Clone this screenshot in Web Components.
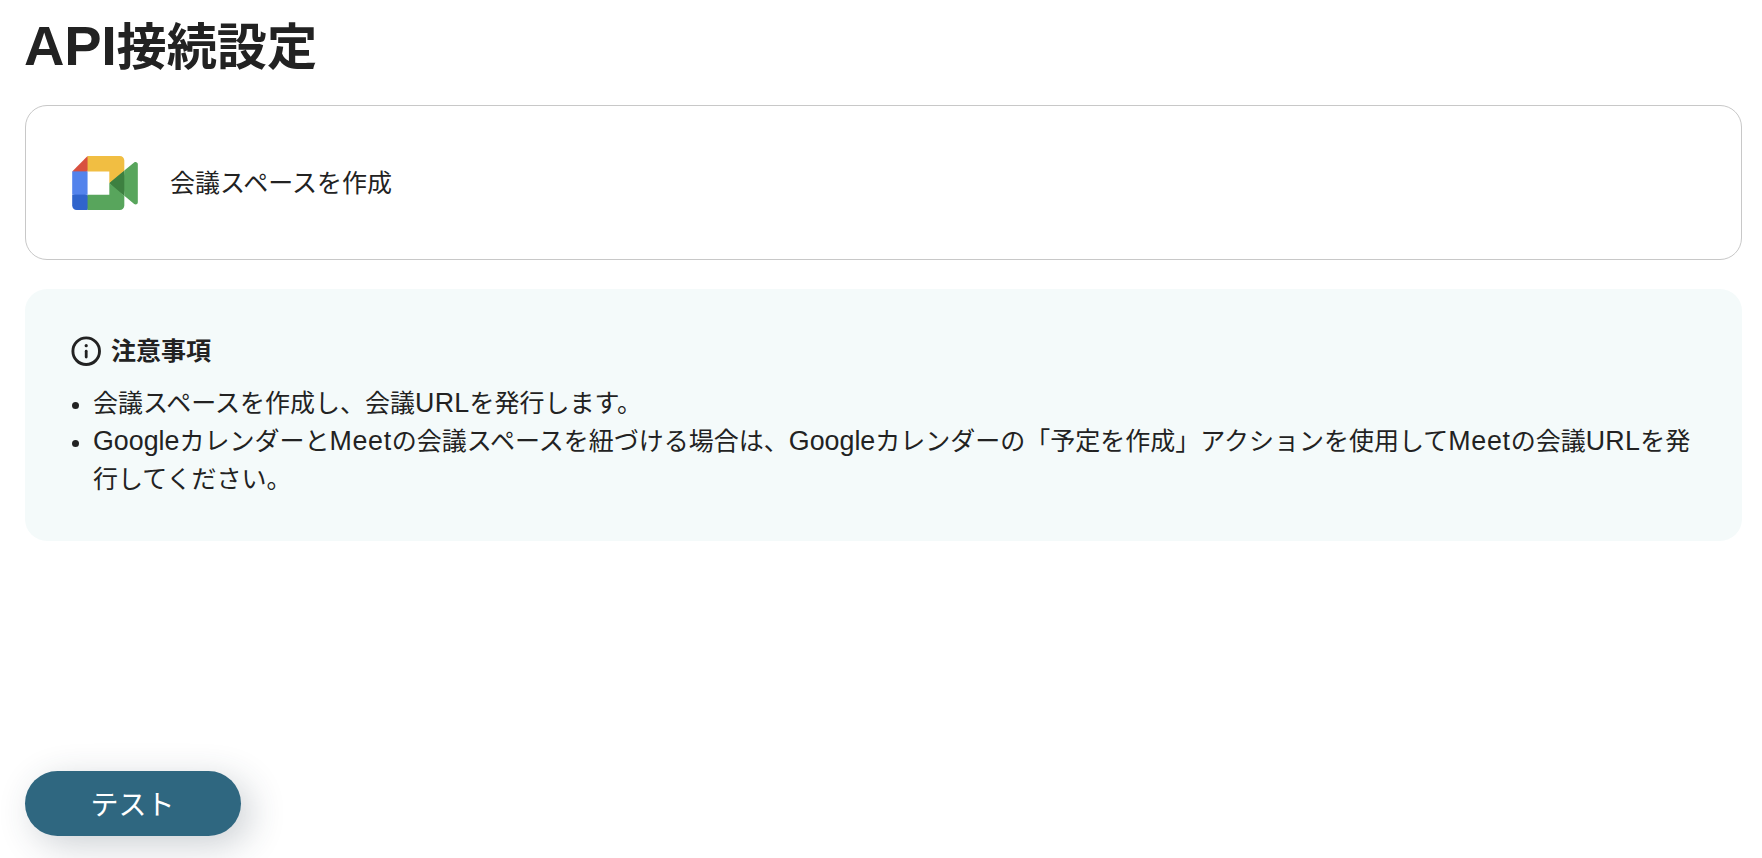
<!DOCTYPE html>
<html lang="ja">
<head>
<meta charset="utf-8">
<title>API接続設定</title>
<style>
  body {
    margin: 0;
    background: #fff;
    color: #222;
    font-family: "Noto Sans CJK JP", sans-serif;
  }
</style>
</head>
<body>
<settings-page>
  <page-title slot="title"><latin-text size="56" spacing="-0.3">API</latin-text>接続設定</page-title>
  <action-card>会議スペースを作成</action-card>
  <notice-box heading="注意事項">
    <notice-item>会議スペースを作成し、会議<latin-text spacing="0.3">URL</latin-text>を発行します。</notice-item>
    <notice-item><latin-text>Google</latin-text>カレンダーと<latin-text spacing="0.7">Meet</latin-text>の会議スペースを紐づける場合は、<latin-text>Google</latin-text>カレンダーの「予定を作成」アクションを使用して<latin-text spacing="0.7">Meet</latin-text>の会議<latin-text spacing="0.3">URL</latin-text>を発行してください。</notice-item>
  </notice-box>
  <pill-button slot="footer">テスト</pill-button>
</settings-page>

<script>
class SettingsPage extends HTMLElement {
  constructor() {
    super();
    this.attachShadow({ mode: "open" });
  }

  connectedCallback() {
    this.shadowRoot.innerHTML = `
      <style>
        :host {
          display: flex;
          flex-direction: column;
          box-sizing: border-box;
          height: 858px;
          padding: 10px 20px 22px 25px;
          overflow: hidden;
        }
        main {
          display: flex;
          flex-direction: column;
          gap: 29px;
          margin-top: 29px;
        }
        footer {
          display: flex;
          margin-top: auto;
        }
      </style>
      <slot name="title"></slot>
      <main><slot></slot></main>
      <footer><slot name="footer"></slot></footer>
    `;
  }
}

class PageTitle extends HTMLElement {
  constructor() {
    super();
    this.attachShadow({ mode: "open" });
  }

  connectedCallback() {
    this.shadowRoot.innerHTML = `
      <style>
        :host { display: block; }
        h1 {
          margin: 0 0 0 -1px;
          height: 66px;
          font-size: 50.2px;
          font-weight: 700;
          line-height: 66px;
          white-space: nowrap;
        }
      </style>
      <h1><slot></slot></h1>
    `;
  }
}

// Latin runs are set a little larger than the kana around them
class LatinText extends HTMLElement {
  constructor() {
    super();
    this.attachShadow({ mode: "open" });
  }

  connectedCallback() {
    const size = this.getAttribute("size") || "26.8";
    const spacing = this.getAttribute("spacing") || "0";
    // no whitespace around the slot, the element is inline
    this.shadowRoot.innerHTML = `<style>
        :host {
          display: inline;
          font-family: "Liberation Sans", Arial, sans-serif;
          font-size: ${size}px;
          line-height: 1;
          letter-spacing: ${spacing}px;
        }
      </style><slot></slot>`;
  }
}

class MeetIcon extends HTMLElement {
  constructor() {
    super();
    this.attachShadow({ mode: "open" });
  }

  connectedCallback() {
    this.shadowRoot.innerHTML = `
      <style>
        :host { display: block; width: 66px; height: 54px; }
        svg { display: block; }
      </style>
      <svg width="66" height="54" viewBox="0 0 87.5 72" aria-hidden="true">
        <path fill="#3d8040" d="M49.5 36l8.53 9.75 11.47 7.33 2-17.02-2-16.64-11.69 6.44z"/>
        <path fill="#3064cc" d="M0 51.5V66c0 3.315 2.685 6 6 6h14.5l3-10.96-3-9.54-9.95-3z"/>
        <path fill="#d8503f" d="M20.5 0L0 20.5l10.55 3 9.95-3 2.95-9.41z"/>
        <path fill="#5383ec" d="M20.5 20.5H0v31h20.5z"/>
        <path fill="#58a55c" d="M82.6 8.68L69.5 19.42v33.66l13.16 10.79c1.97 1.54 4.85.135 4.85-2.37V11c0-2.535-2.945-3.925-4.91-2.32zM49.5 36v15.5h-29V72h43c3.315 0 6-2.685 6-6V53.08z"/>
        <path fill="#f1be42" d="M63.5 0h-43v20.5h29V36l20-16.57V6c0-3.315-2.685-6-6-6z"/>
      </svg>
    `;
  }
}

class InfoIcon extends HTMLElement {
  constructor() {
    super();
    this.attachShadow({ mode: "open" });
  }

  connectedCallback() {
    this.shadowRoot.innerHTML = `
      <style>
        :host { display: block; width: 30px; height: 30px; }
        svg { display: block; }
      </style>
      <svg width="30" height="30" viewBox="0 0 30 30" fill="none" stroke="#222" aria-hidden="true">
        <circle cx="15.2" cy="15.2" r="13.3" stroke-width="2.9"/>
        <path d="M15.2 15.2v5.8" stroke-width="2.8" stroke-linecap="round"/>
        <circle cx="15.2" cy="9.7" r="1.6" fill="#222" stroke="none"/>
      </svg>
    `;
  }
}

class ActionCard extends HTMLElement {
  constructor() {
    super();
    this.attachShadow({ mode: "open" });
  }

  connectedCallback() {
    this.shadowRoot.innerHTML = `
      <style>
        :host {
          display: flex;
          align-items: center;
          gap: 32px;
          box-sizing: border-box;
          height: 155px;
          padding: 0 46px;
          border: 1px solid #c8c8c8;
          border-radius: 22px;
          font-size: 25px;
          line-height: 38px;
        }
        span { margin-bottom: 4px; }
      </style>
      <meet-icon></meet-icon>
      <span><slot></slot></span>
    `;
  }
}

class NoticeBox extends HTMLElement {
  constructor() {
    super();
    this.attachShadow({ mode: "open" });
  }

  connectedCallback() {
    this.shadowRoot.innerHTML = `
      <style>
        :host {
          display: block;
          box-sizing: border-box;
          height: 252px;
          padding: 43px 46px 0;
          border-radius: 22px;
          background: #f4fafa;
          font-size: 25px;
          line-height: 38px;
        }
        .heading {
          display: flex;
          align-items: center;
          gap: 10px;
          height: 38px;
          margin-bottom: 12px;
          font-weight: 700;
        }
        .heading span { margin-bottom: 4px; }
      </style>
      <div class="heading"><info-icon></info-icon><span>${this.getAttribute("heading")}</span></div>
      <slot></slot>
    `;
  }
}

class NoticeItem extends HTMLElement {
  constructor() {
    super();
    this.attachShadow({ mode: "open" });
  }

  connectedCallback() {
    this.shadowRoot.innerHTML = `
      <style>
        :host { display: flex; gap: 14px; }
        .dot {
          flex: none;
          width: 7px;
          height: 7px;
          margin: 20px 0 0 1px;
          border-radius: 50%;
          background: #222;
        }
      </style>
      <span class="dot"></span>
      <div><slot></slot></div>
    `;
  }
}

class PillButton extends HTMLElement {
  constructor() {
    super();
    this.attachShadow({ mode: "open" });
  }

  connectedCallback() {
    this.shadowRoot.innerHTML = `
      <style>
        :host { display: block; }
        button {
          display: block;
          width: 216px;
          height: 65px;
          padding: 0 1px 2px 0;
          border: 0;
          border-radius: 33px;
          background: #2f6780;
          box-shadow: 9px 9px 36px rgba(40, 60, 75, 0.24);
          color: #fff;
          font: 400 28px/64px "Noto Sans CJK JP", sans-serif;
        }
      </style>
      <button type="button"><slot></slot></button>
    `;
  }
}

customElements.define("settings-page", SettingsPage);
customElements.define("page-title", PageTitle);
customElements.define("latin-text", LatinText);
customElements.define("meet-icon", MeetIcon);
customElements.define("info-icon", InfoIcon);
customElements.define("action-card", ActionCard);
customElements.define("notice-box", NoticeBox);
customElements.define("notice-item", NoticeItem);
customElements.define("pill-button", PillButton);
</script>
</body>
</html>
